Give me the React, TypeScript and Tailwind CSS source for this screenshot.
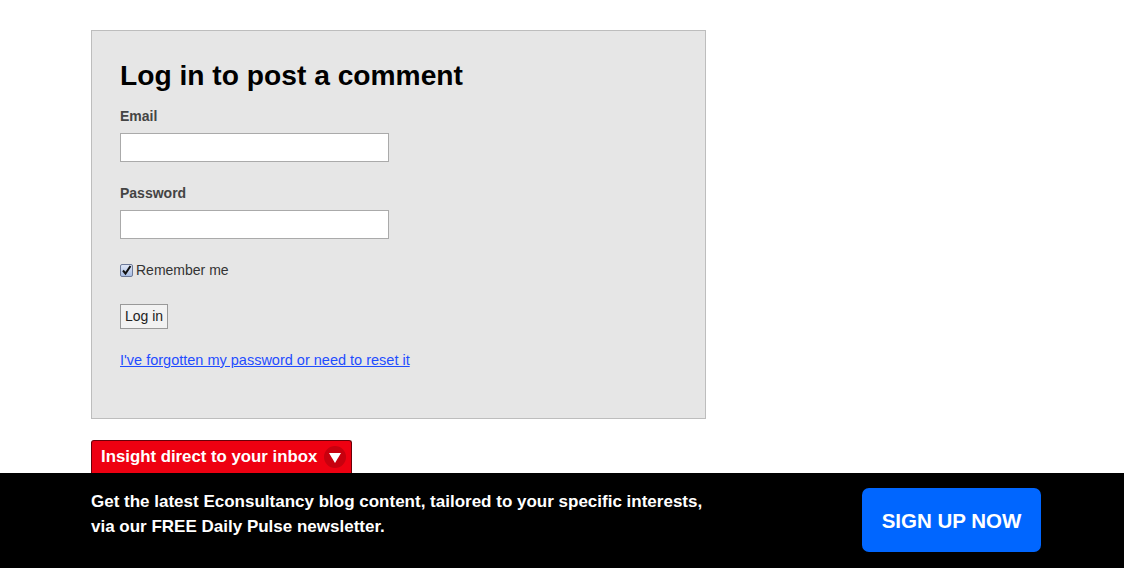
import React from 'react';

export default function App() {
  return (
    <div className="w-[1124px] h-[568px] bg-white flex flex-col font-['Liberation_Sans',Arial,sans-serif] overflow-hidden">
      <div className="pl-[91px] pt-[30px]">
        <div className="w-[615px] h-[389px] bg-[#e6e6e6] border border-[#bdbdbd] pl-[28px] pt-[27px]">
          <h2 className="text-[28.2px] leading-[34px] font-bold text-black">Log in to post a comment</h2>
          <div className="mt-[16px] text-[14px] leading-[16px] font-bold text-[#444]">Email</div>
          <input type="text" className="mt-[9px] block w-[269px] h-[29px] bg-white border border-[#aaa]" />
          <div className="mt-[23px] text-[14px] leading-[16px] font-bold text-[#444]">Password</div>
          <input type="password" className="mt-[9px] block w-[269px] h-[29px] bg-white border border-[#aaa]" />
          <label className="mt-[23px] flex items-center gap-[3px] text-[14px] leading-[16px] text-[#333]">
            <span className="w-[13px] h-[13px] rounded-[2px] border border-[#6d7a99] bg-gradient-to-b from-[#dfe7f7] to-[#a9bde3] flex items-center justify-center">
              <svg width="11" height="11" viewBox="0 0 11 11"><path d="M2 5.5 L4.5 8.5 L9.5 1" stroke="#111" strokeWidth="2" fill="none" /></svg>
            </span>
            Remember me
          </label>
          <button className="mt-[26px] block h-[25px] px-[4px] bg-[#f2f2f2] border border-[#999] text-[14px] text-[#222]">Log in</button>
          <a href="#" className="mt-[23px] inline-block text-[14.5px] leading-[17px] text-[#1f4dff] underline">I've forgotten my password or need to reset it</a>
        </div>
      </div>
      <div className="pl-[91px] mt-[21px]">
        <div className="w-[261px] h-[33px] bg-[#ee0011] border-t border-x border-[#6a0008] rounded-t-[3px] flex items-center pl-[9px]">
          <span className="text-white font-bold text-[16.8px] leading-[20px]">Insight direct to your inbox</span>
          <span className="ml-[7px] w-[22px] h-[22px] rounded-full bg-[#c7000e] flex items-center justify-center">
            <svg width="12" height="11" viewBox="0 0 12 11"><path d="M0 1 H12 L6 11 Z" fill="white" /></svg>
          </span>
        </div>
      </div>
      <div className="flex-1 bg-black flex items-center pl-[91px] pr-[83px] justify-between">
        <p className="text-white font-bold text-[17px] leading-[25px] pb-[14px]">
          Get the latest Econsultancy blog content, tailored to your specific interests,<br />
          via our FREE Daily Pulse newsletter.
        </p>
        <button className="w-[179px] h-[64px] rounded-[7px] bg-[#0066ff] text-white font-bold text-[20.5px] mb-[1px] pt-[2px]">SIGN UP NOW</button>
      </div>
    </div>
  );
}
